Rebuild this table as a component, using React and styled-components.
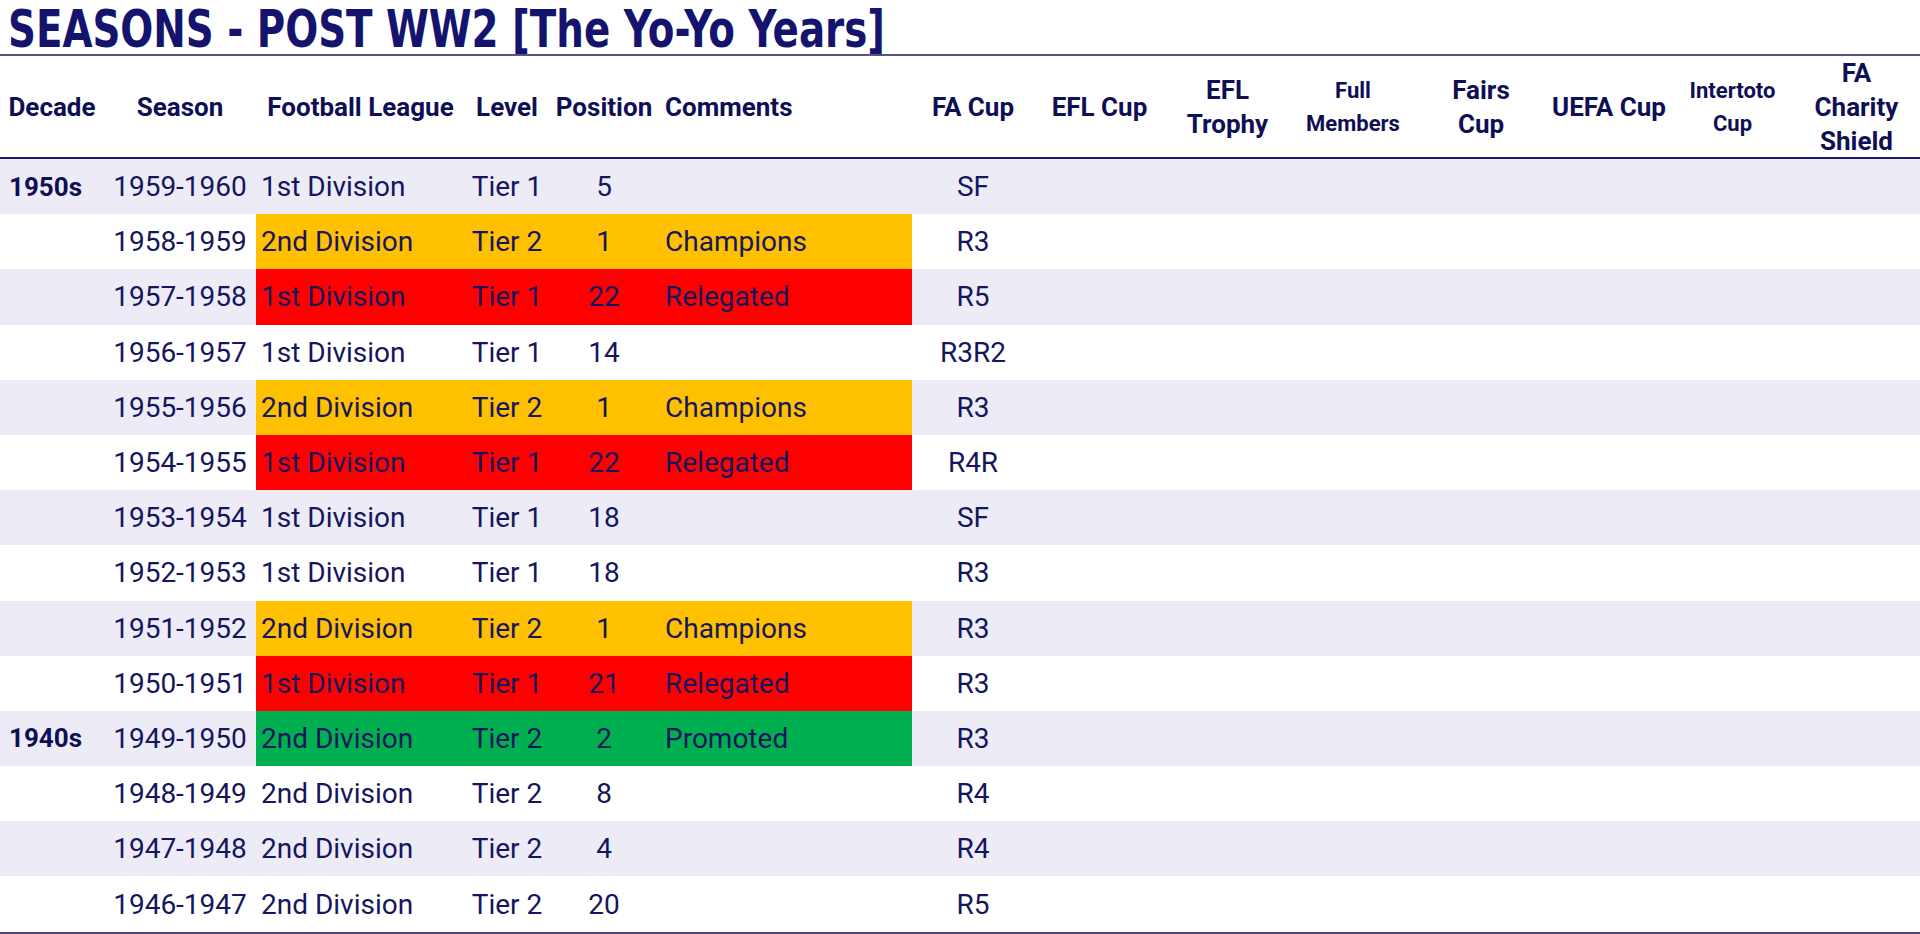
import React from 'react';
import styled, { createGlobalStyle, css } from 'styled-components';

const GlobalStyle = createGlobalStyle`
	html, body {
		margin: 0;
		padding: 0;
		background: #ffffff;
	}
	body {
		font-family: Roboto, 'Liberation Sans', sans-serif;
		color: #16165e;
	}
`;

const COLUMNS = '104px 152px 209px 84px 110px 253px 122px 131px 125px 126px 130px 126px 121px 127px';

const TONES = {
	yellow: '#ffc000',
	red: '#ff0000',
	green: '#00b050'
};

const Sheet = styled.div`
	width: 1920px;
	height: 934px;
	display: flex;
	flex-direction: column;
	overflow: hidden;
`;

const TitleBar = styled.div`
	height: 56px;
	flex-shrink: 0;
	border-bottom: 2px solid #55557f;
	padding-left: 8px;
	box-sizing: border-box;
`;

const TitleText = styled.h1`
	display: inline-block;
	margin: 0;
	font-family: 'DejaVu Sans Condensed', 'DejaVu Sans', sans-serif;
	font-stretch: condensed;
	font-weight: 700;
	font-size: 48px;
	line-height: 54px;
	color: #14146e;
	white-space: nowrap;
	transform: scale(0.898, 1.06);
	transform-origin: left top;
`;

const HeaderRow = styled.div`
	display: grid;
	grid-template-columns: ${COLUMNS};
	height: 103px;
	flex-shrink: 0;
	border-bottom: 2px solid #1c1c6a;
	box-sizing: border-box;
`;

const HeadCell = styled.div`
	display: flex;
	align-items: center;
	justify-content: ${(p) => (p.$left ? 'flex-start' : 'center')};
	padding-left: ${(p) => (p.$left ? '6px' : '0')};
	text-align: ${(p) => (p.$left ? 'left' : 'center')};
	font-weight: 700;
	font-size: ${(p) => (p.$small ? '22px' : '26px')};
	line-height: ${(p) => (p.$small ? '33px' : '34px')};
	color: #0e0f55;
	white-space: pre-line;
`;

const Body = styled.div`
	display: flex;
	flex-direction: column;
	border-bottom: 2px solid #4a4a7a;
`;

const Row = styled.div`
	display: grid;
	grid-template-columns: ${COLUMNS};
	height: 55.2px;
	flex-shrink: 0;
	background: ${(p) => (p.$shaded ? '#ecebf6' : '#ffffff')};
`;

const Cell = styled.div`
	display: flex;
	align-items: center;
	font-size: 28px;
	color: #16165e;
	white-space: nowrap;
	justify-content: ${(p) => (p.$align === 'left' ? 'flex-start' : 'center')};
	padding-left: ${(p) => p.$pad || 0}px;
	${(p) =>
		p.$tone &&
		css`
			background: ${TONES[p.$tone]};
		`}
`;

const DecadeCell = styled(Cell)`
	font-weight: 700;
	font-size: 26px;
	color: #0e0f55;
`;

const headers = [
	{ label: 'Decade' },
	{ label: 'Season' },
	{ label: 'Football League' },
	{ label: 'Level' },
	{ label: 'Position' },
	{ label: 'Comments', left: true },
	{ label: 'FA Cup' },
	{ label: 'EFL Cup' },
	{ label: 'EFL\nTrophy' },
	{ label: 'Full\nMembers', small: true },
	{ label: 'Fairs\nCup' },
	{ label: 'UEFA Cup' },
	{ label: 'Intertoto\nCup', small: true },
	{ label: 'FA\nCharity\nShield' }
];

const seasons = [
	{ decade: '1950s', season: '1959-1960', league: '1st Division', level: 'Tier 1', pos: '5', note: '', fa: 'SF' },
	{ season: '1958-1959', league: '2nd Division', level: 'Tier 2', pos: '1', note: 'Champions', fa: 'R3', tone: 'yellow' },
	{ season: '1957-1958', league: '1st Division', level: 'Tier 1', pos: '22', note: 'Relegated', fa: 'R5', tone: 'red' },
	{ season: '1956-1957', league: '1st Division', level: 'Tier 1', pos: '14', note: '', fa: 'R3R2' },
	{ season: '1955-1956', league: '2nd Division', level: 'Tier 2', pos: '1', note: 'Champions', fa: 'R3', tone: 'yellow' },
	{ season: '1954-1955', league: '1st Division', level: 'Tier 1', pos: '22', note: 'Relegated', fa: 'R4R', tone: 'red' },
	{ season: '1953-1954', league: '1st Division', level: 'Tier 1', pos: '18', note: '', fa: 'SF' },
	{ season: '1952-1953', league: '1st Division', level: 'Tier 1', pos: '18', note: '', fa: 'R3' },
	{ season: '1951-1952', league: '2nd Division', level: 'Tier 2', pos: '1', note: 'Champions', fa: 'R3', tone: 'yellow' },
	{ season: '1950-1951', league: '1st Division', level: 'Tier 1', pos: '21', note: 'Relegated', fa: 'R3', tone: 'red' },
	{ decade: '1940s', season: '1949-1950', league: '2nd Division', level: 'Tier 2', pos: '2', note: 'Promoted', fa: 'R3', tone: 'green' },
	{ season: '1948-1949', league: '2nd Division', level: 'Tier 2', pos: '8', note: '', fa: 'R4' },
	{ season: '1947-1948', league: '2nd Division', level: 'Tier 2', pos: '4', note: '', fa: 'R4' },
	{ season: '1946-1947', league: '2nd Division', level: 'Tier 2', pos: '20', note: '', fa: 'R5' }
];

export default function App() {
	return (
		<Sheet>
			<GlobalStyle />
			<TitleBar>
				<TitleText>SEASONS - POST WW2 [The Yo-Yo Years]</TitleText>
			</TitleBar>
			<HeaderRow>
				{headers.map((h) => (
					<HeadCell key={h.label} $left={h.left} $small={h.small}>
						{h.label}
					</HeadCell>
				))}
			</HeaderRow>
			<Body>
				{seasons.map((s, i) => (
					<Row key={s.season} $shaded={i % 2 === 0}>
						<DecadeCell $align='left' $pad={9}>
							{s.decade}
						</DecadeCell>
						<Cell>{s.season}</Cell>
						<Cell $align='left' $pad={5} $tone={s.tone}>
							{s.league}
						</Cell>
						<Cell $tone={s.tone}>{s.level}</Cell>
						<Cell $tone={s.tone}>{s.pos}</Cell>
						<Cell $align='left' $pad={6} $tone={s.tone}>
							{s.note}
						</Cell>
						<Cell>{s.fa}</Cell>
						{/* the other cup columns are empty for these seasons */}
						<Cell />
						<Cell />
						<Cell />
						<Cell />
						<Cell />
						<Cell />
						<Cell />
					</Row>
				))}
			</Body>
		</Sheet>
	);
}
